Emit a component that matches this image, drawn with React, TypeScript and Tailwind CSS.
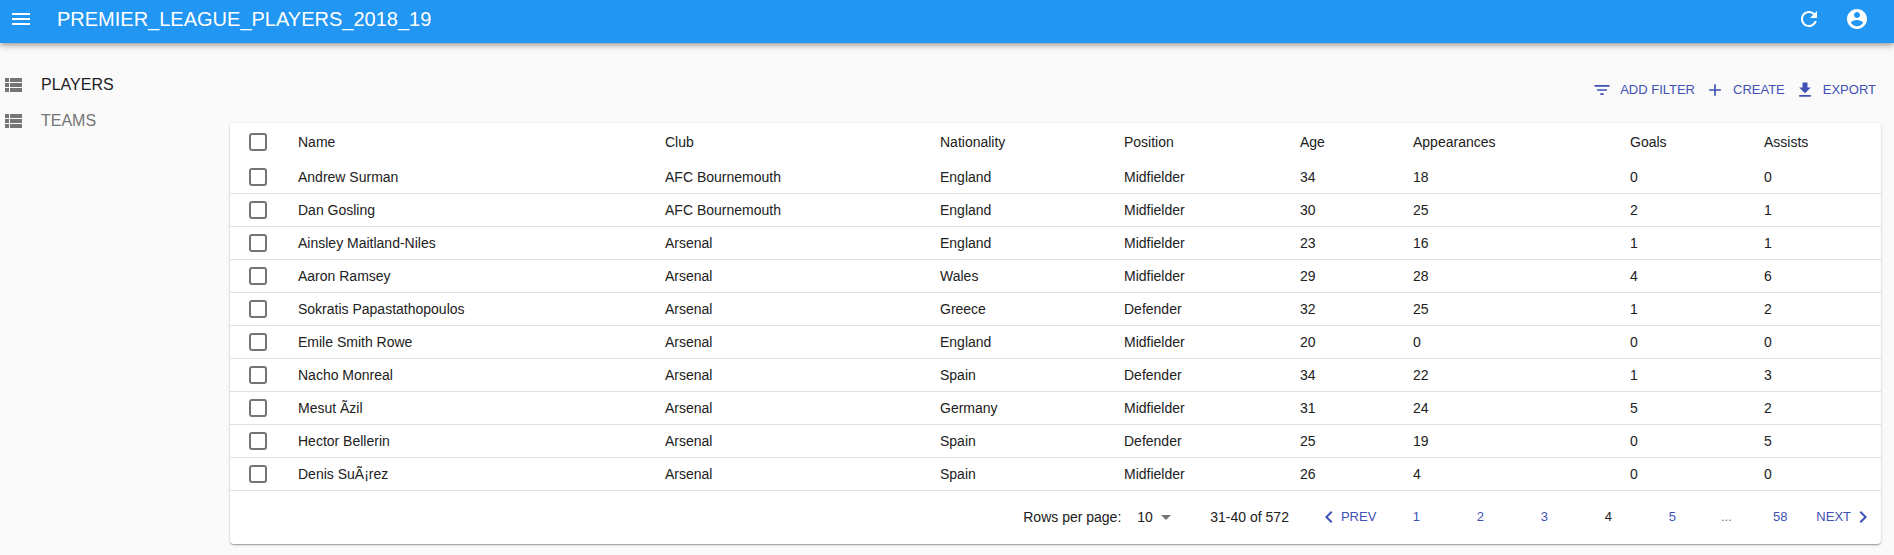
import React from "react";

const paths = {
  menu: "M3 18h18v-2H3v2zm0-5h18v-2H3v2zm0-7v2h18V6H3z",
  refresh:
    "M17.65 6.35C16.2 4.9 14.21 4 12 4c-4.42 0-7.99 3.58-7.99 8s3.57 8 7.99 8c3.73 0 6.84-2.55 7.73-6h-2.08c-.82 2.33-3.04 4-5.65 4-3.31 0-6-2.69-6-6s2.69-6 6-6c1.66 0 3.14.69 4.22 1.78L13 11h7V4l-2.35 2.35z",
  account:
    "M12 2C6.48 2 2 6.48 2 12s4.48 10 10 10 10-4.48 10-10S17.52 2 12 2zm0 3c1.66 0 3 1.34 3 3s-1.34 3-3 3-3-1.34-3-3 1.34-3 3-3zm0 14.2c-2.5 0-4.71-1.28-6-3.22.03-1.99 4-3.08 6-3.08 1.99 0 5.97 1.09 6 3.08-1.29 1.94-3.5 3.22-6 3.22z",
  list: "M4 14h4v-4H4v4zm0 5h4v-4H4v4zM4 9h4V5H4v4zm5 5h12v-4H9v4zm0 5h12v-4H9v4zM9 5v4h12V5H9z",
  filter: "M10 18h4v-2h-4v2zM3 6v2h18V6H3zm3 7h12v-2H6v2z",
  add: "M19 13h-6v6h-2v-6H5v-2h6V5h2v6h6v2z",
  download: "M19 9h-4V3H9v6H5l7 7 7-7zM5 18v2h14v-2H5z",
  left: "M15.41 7.41L14 6l-6 6 6 6 1.41-1.41L10.83 12z",
  right: "M10 6L8.59 7.41 13.17 12l-4.58 4.59L10 18l6-6z",
  down: "M7 10l5 5 5-5z",
};

function Icon({ name, className = "size-6" }: { name: keyof typeof paths; className?: string }) {
  return (
    <svg viewBox="0 0 24 24" fill="currentColor" aria-hidden="true" className={`shrink-0 ${className}`}>
      <path d={paths[name]} />
    </svg>
  );
}

const columns = [
  { label: "Name", width: "w-[367px]" },
  { label: "Club", width: "w-[275px]" },
  { label: "Nationality", width: "w-[184px]" },
  { label: "Position", width: "w-[176px]" },
  { label: "Age", width: "w-[113px]" },
  { label: "Appearances", width: "w-[217px]" },
  { label: "Goals", width: "w-[134px]" },
  { label: "Assists", width: "w-[133px]" },
];

const players: (string | number)[][] = [
  ["Andrew Surman", "AFC Bournemouth", "England", "Midfielder", 34, 18, 0, 0],
  ["Dan Gosling", "AFC Bournemouth", "England", "Midfielder", 30, 25, 2, 1],
  ["Ainsley Maitland-Niles", "Arsenal", "England", "Midfielder", 23, 16, 1, 1],
  ["Aaron Ramsey", "Arsenal", "Wales", "Midfielder", 29, 28, 4, 6],
  ["Sokratis Papastathopoulos", "Arsenal", "Greece", "Defender", 32, 25, 1, 2],
  ["Emile Smith Rowe", "Arsenal", "England", "Midfielder", 20, 0, 0, 0],
  ["Nacho Monreal", "Arsenal", "Spain", "Defender", 34, 22, 1, 3],
  ["Mesut Ãzil", "Arsenal", "Germany", "Midfielder", 31, 24, 5, 2],
  ["Hector Bellerin", "Arsenal", "Spain", "Defender", 25, 19, 0, 5],
  ["Denis SuÃ¡rez", "Arsenal", "Spain", "Midfielder", 26, 4, 0, 0],
];

function Tick({ label }: { label: string }) {
  return (
    <input
      type="checkbox"
      aria-label={label}
      className="block size-[18px] appearance-none rounded-[3px] border-2 border-[#757575] checked:bg-[#3f51b5]"
    />
  );
}

function Action({ icon, children }: { icon: keyof typeof paths; children: string }) {
  return (
    <button type="button" className="flex items-center gap-2 px-[5px] py-1">
      <Icon name={icon} className="size-5" />
      {children}
    </button>
  );
}

function PageButton({ page, current = false }: { page: number; current?: boolean }) {
  return (
    <button
      type="button"
      aria-current={current ? "page" : undefined}
      className={`h-8 w-16 ${current ? "text-[#212121]" : ""}`}
    >
      {page}
    </button>
  );
}

export default function App() {
  return (
    <div className="min-h-screen bg-[#fafafa] font-['Liberation_Sans',Arial,sans-serif] text-[#212121]">
      <header className="relative flex items-center bg-[#2196f3] pt-[7px] pr-[25px] pb-3 pl-[9px] text-white shadow-[0_2px_4px_-1px_rgba(0,0,0,0.2),0_4px_5px_0_rgba(0,0,0,0.14),0_1px_10px_0_rgba(0,0,0,0.12)]">
        <button type="button" aria-label="Open menu">
          <Icon name="menu" />
        </button>
        <h1 className="ml-6 flex-1 text-xl leading-6">PREMIER_LEAGUE_PLAYERS_2018_19</h1>
        <div className="flex gap-6">
          <button type="button" aria-label="Refresh">
            <Icon name="refresh" />
          </button>
          <button type="button" aria-label="Profile">
            <Icon name="account" />
          </button>
        </div>
      </header>

      <div className="flex">
        <nav className="flex w-[230px] shrink-0 flex-col gap-3 pt-[30px] pl-px text-base leading-6">
          <a href="#players" aria-current="page" className="flex items-center gap-4">
            <Icon name="list" className="size-6 text-[#757575]" />
            PLAYERS
          </a>
          <a href="#teams" className="flex items-center gap-4 text-[#757575]">
            <Icon name="list" />
            TEAMS
          </a>
        </nav>

        <main className="min-w-0 flex-1 pt-[33px] pr-[13px] pb-2.5">
          <div className="flex justify-end pb-[19px] text-[13px] text-[#3f51b5]">
            <Action icon="filter">ADD FILTER</Action>
            <Action icon="add">CREATE</Action>
            <Action icon="download">EXPORT</Action>
          </div>

          <section className="rounded-sm bg-white text-sm shadow-[0_1px_3px_0_rgba(0,0,0,0.2),0_1px_1px_0_rgba(0,0,0,0.14),0_2px_1px_-1px_rgba(0,0,0,0.12)]">
            <table className="w-full table-fixed border-separate border-spacing-0 text-left">
              <thead>
                <tr className="h-[38px]">
                  <th scope="col" className="w-[52px] pl-[19px]">
                    <Tick label="Select all" />
                  </th>
                  {columns.map((c) => (
                    <th key={c.label} scope="col" className={`px-4 font-normal ${c.width}`}>
                      {c.label}
                    </th>
                  ))}
                </tr>
              </thead>
              <tbody>
                {players.map((p) => (
                  <tr key={p[0]} className="h-[33px]">
                    <td className="border-b border-[#e0e0e0] pl-[19px]">
                      <Tick label={`Select ${p[0]}`} />
                    </td>
                    {p.map((value, i) => (
                      <td key={i} className="border-b border-[#e0e0e0] px-4">
                        {value}
                      </td>
                    ))}
                  </tr>
                ))}
              </tbody>
            </table>

            <footer className="flex items-center justify-end pt-2.5 pr-0.5 pb-[11px]">
              <label htmlFor="rows">Rows per page:</label>
              <div className="relative ml-2">
                <select id="rows" defaultValue="10" className="h-8 w-[49px] appearance-none bg-transparent pl-2">
                  <option>5</option>
                  <option>10</option>
                  <option>25</option>
                </select>
                <Icon name="down" className="pointer-events-none absolute top-1 right-0 size-6 text-[#757575]" />
              </div>
              <p className="ml-8">31-40 of 572</p>
              <nav aria-label="Pagination" className="ml-6 flex items-center text-[13px] text-[#3f51b5]">
                <button type="button" className="flex h-8 items-center pr-2 pl-1">
                  <Icon name="left" />
                  PREV
                </button>
                <PageButton page={1} />
                <PageButton page={2} />
                <PageButton page={3} />
                <PageButton page={4} current />
                <PageButton page={5} />
                <span className="w-11 text-center text-[#757575]">...</span>
                <PageButton page={58} />
                <button type="button" className="flex h-8 items-center px-1">
                  NEXT
                  <Icon name="right" />
                </button>
              </nav>
            </footer>
          </section>
        </main>
      </div>
    </div>
  );
}
